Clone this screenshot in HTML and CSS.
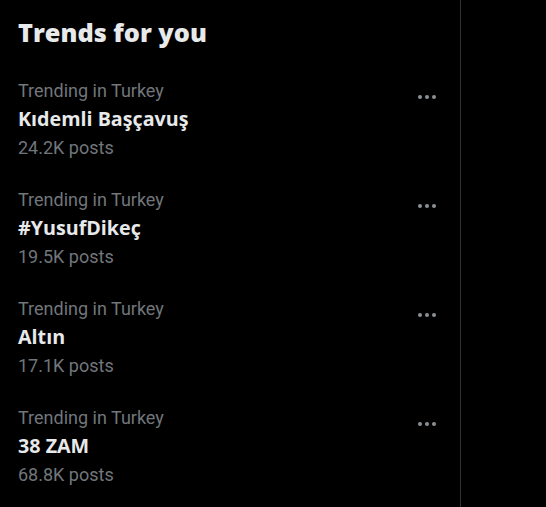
FILE: index.html
```html
<!DOCTYPE html>
<html>
<head>
<meta charset="utf-8">
<link rel="stylesheet" href="styles.css">
</head>
<body>
<div class="layout">
  <section class="trends">
    <h2 class="heading">Trends for you</h2>
    <div class="trend">
      <div class="info">
        <div class="meta">Trending in Turkey</div>
        <div class="name">Kıdemli Başçavuş</div>
        <div class="count">24.2K posts</div>
      </div>
      <div class="more"><span></span><span></span><span></span></div>
    </div>
    <div class="trend">
      <div class="info">
        <div class="meta">Trending in Turkey</div>
        <div class="name">#YusufDikeç</div>
        <div class="count">19.5K posts</div>
      </div>
      <div class="more"><span></span><span></span><span></span></div>
    </div>
    <div class="trend">
      <div class="info">
        <div class="meta">Trending in Turkey</div>
        <div class="name">Altın</div>
        <div class="count">17.1K posts</div>
      </div>
      <div class="more"><span></span><span></span><span></span></div>
    </div>
    <div class="trend">
      <div class="info">
        <div class="meta">Trending in Turkey</div>
        <div class="name">38 ZAM</div>
        <div class="count">68.8K posts</div>
      </div>
      <div class="more"><span></span><span></span><span></span></div>
    </div>
  </section>
  <div class="side"></div>
</div>
</body>
</html>
```
FILE: styles.css
```css
html, body {
  margin: 0;
  padding: 0;
  background: #000;
  height: 100%;
}
body {
  font-family: Roboto, "Noto Sans", sans-serif;
  color: #e7e9ea;
  overflow: hidden;
}
.layout {
  display: flex;
  height: 507px;
}
.trends {
  width: 460px;
  border-right: 1px solid #2f3336;
  box-sizing: content-box;
}
.side {
  flex: 1;
}
.heading {
  margin: 0;
  padding: 14px 18px 0;
  font-family: "Open Sans", Roboto, sans-serif;
  font-size: 25.3px;
  font-weight: 800;
  line-height: 36px;
  color: #e7e9ea;
}
.trend {
  display: flex;
  justify-content: space-between;
  align-items: flex-start;
  padding: 27px 18px 0;
  height: 82px;
}
.info {
  display: flex;
  flex-direction: column;
}
.meta, .count {
  font-size: 18px;
  line-height: 28px;
  color: #71767b;
}
.count {
  margin-top: 1px;
}
.name {
  font-family: "Open Sans", Roboto, sans-serif;
  font-size: 19.7px;
  font-weight: 700;
  line-height: 28px;
  color: #e7e9ea;
}
.more {
  display: flex;
  gap: 3px;
  margin-top: 18px;
  margin-right: 6px;
}
.more span {
  width: 4px;
  height: 4px;
  border-radius: 50%;
  background: #8b9096;
}
```
